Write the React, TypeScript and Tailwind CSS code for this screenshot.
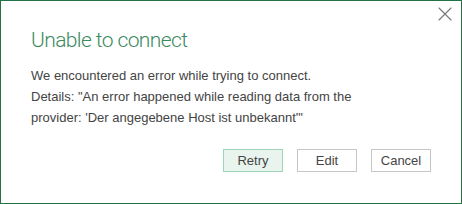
import { X } from 'lucide-react'

const buttons = [
  { label: 'Retry', primary: true },
  { label: 'Edit', primary: false },
  { label: 'Cancel', primary: false },
]

export default function App() {
  return (
    <div className="relative w-[462px] h-[204px] bg-white border border-[#217346] flex flex-col" style={{ fontFamily: '"Segoe UI", "Liberation Sans", Arial, sans-serif' }}>
      {/* close glyph in the corner */}
      <button className="absolute top-[1px] right-[4px] w-[24px] h-[24px] flex items-center justify-center text-[#777]">
        <X size={24} strokeWidth={1.1} />
      </button>

      <div className="px-[30px] pt-[25px]">
        <h1 className="text-[21px] leading-[28px] font-light tracking-[-0.6px] text-[#3c8a5e]" style={{ fontFamily: 'Roboto, Lato, sans-serif' }}>
          Unable to connect
        </h1>
        <div className="mt-[11px] text-[13px] leading-[21px] text-[#444]">
          <p>We encountered an error while trying to connect.</p>
          <p>Details: "An error happened while reading data from the<br />provider: 'Der angegebene Host ist unbekannt'"</p>
        </div>
      </div>

      <div className="flex justify-end gap-[14px] px-[30px] mt-[21px]">
        {buttons.map(b => (
          <button
            key={b.label}
            className={
              b.primary
                ? 'w-[60px] h-[23px] text-[13px] text-[#444] bg-[#e8f4ed] border border-[#9fd5b5]'
                : 'w-[60px] h-[23px] text-[13px] text-[#444] bg-white border border-[#c6c6c6]'
            }
          >
            {b.label}
          </button>
        ))}
      </div>
    </div>
  )
}
